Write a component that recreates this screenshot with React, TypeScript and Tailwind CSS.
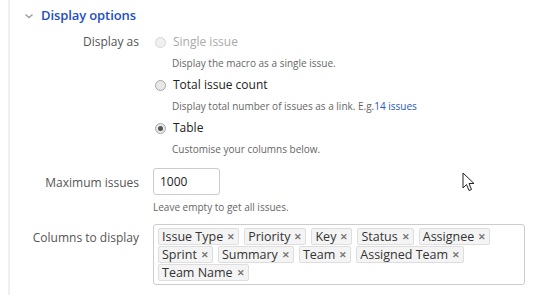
import React from "react";

const tags = ["Issue Type", "Priority", "Key", "Status", "Assignee", "Sprint", "Summary", "Team", "Assigned Team", "Team Name"];

function Radio({ checked, disabled }: { checked?: boolean; disabled?: boolean }) {
  return (
    <span
      className={`inline-flex items-center justify-center w-[11px] h-[11px] rounded-full border ${disabled ? "border-[#d8d8d8] bg-[#f0f0f0]" : "border-[#a8a8a8] bg-[#e8e8e8]"}`}
    >
      {checked && <span className="w-[5px] h-[5px] rounded-full bg-[#555]" />}
    </span>
  );
}

export default function App() {
  return (
    <div className="w-[554px] h-[297px] bg-white overflow-hidden relative" style={{ fontFamily: '"Open Sans", "Noto Sans", sans-serif' }}>
      <div className="ml-[8px] border-l-2 border-[#f0f0f0] h-[295px]">
        <div className="flex items-center h-[32px] pl-[14px]">
          <svg width="10" height="8" viewBox="0 0 10 8" className="mr-[7px]">
            <path d="M1.5 2.5 L5 5.5 L8.5 2.5" stroke="#9aa0a6" strokeWidth="1.4" fill="none" />
          </svg>
          <span className="text-[13px] font-semibold text-[#1e4fc2] tracking-[-0.1px]">Display options</span>
        </div>
        <div className="grid grid-cols-[129px_1fr] gap-x-[14px] text-[12px] text-[#333]">
          <div className="text-right text-[#555] leading-[20px]">Display as</div>
          <div className="flex flex-col">
            <div className="flex items-center h-[20px] pl-[2px]">
              <Radio disabled />
              <span className="ml-[7px] text-[#aaa]">Single issue</span>
            </div>
            <div className="pl-[19px] text-[10px] text-[#666] leading-[22px] h-[23px]">Display the macro as a single issue.</div>
            <div className="flex items-center h-[20px] pl-[2px]">
              <Radio />
              <span className="ml-[7px] text-[#222]">Total issue count</span>
            </div>
            <div className="pl-[19px] text-[10px] text-[#666] leading-[22px] h-[23px]">
              Display total number of issues as a link. E.g.<span className="text-[#1f57c3]">14 issues</span>
            </div>
            <div className="flex items-center h-[20px] pl-[2px]">
              <Radio checked />
              <span className="ml-[7px] text-[#222]">Table</span>
            </div>
            <div className="pl-[19px] text-[10px] text-[#666] leading-[22px] h-[23px]">Customise your columns below.</div>
          </div>

          <div className="text-right text-[#555] pt-[12px] leading-[20px]">Maximum issues</div>
          <div className="pt-[7px]">
            <div className="w-[67px] h-[27px] border border-[#ccc] rounded-[3px] flex items-center pl-[6px] text-[12px] text-[#222]">1000</div>
            <div className="text-[10px] text-[#666] leading-[16px] mt-[4px]">Leave empty to get all issues.</div>
          </div>

          <div className="text-right text-[#555] pt-[13px] leading-[20px]">Columns to display</div>
          <div className="pt-[9px]">
            <div className="w-[372px] h-[61px] border border-[#ccc] rounded-[3px] px-[4px] pt-[3px] flex flex-wrap content-start gap-x-[5px] gap-y-[1px]">
              {tags.map((t) => (
                <span key={t} className="h-[17px] flex items-center px-[3px] bg-[#f4f4f4] border border-[#dedede] rounded-[2px] text-[12.5px] leading-[15px] text-[#333]">
                  {t}
                  <span className="ml-[4px] text-[9px] text-[#777] font-bold">✕</span>
                </span>
              ))}
            </div>
          </div>
        </div>
      </div>
      <svg className="absolute left-[462px] top-[172px]" width="13" height="20" viewBox="0 0 13 20">
        <path d="M1 1 L1 16 L4.5 12.5 L7 18.5 L9.5 17.5 L7 11.5 L12 11.5 Z" fill="#fff" stroke="#222" strokeWidth="1" strokeLinejoin="round" />
      </svg>
    </div>
  );
}
